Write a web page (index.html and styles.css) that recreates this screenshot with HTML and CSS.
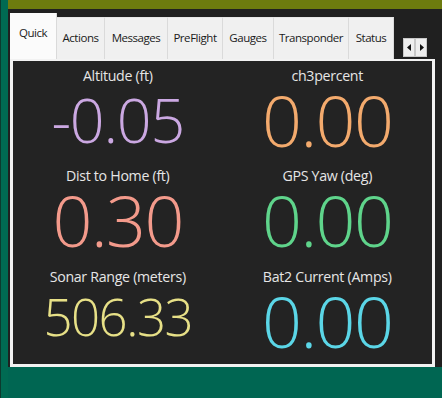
FILE: index.html
```html
<!DOCTYPE html>
<html>
<head>
<meta charset="utf-8">
<link rel="stylesheet" href="styles.css">
</head>
<body>
<div class="strip"></div>
<div class="main">
  <div class="topbar"></div>
  <div class="frame">
    <div class="tabbar">
      <div class="tab sel w1">Quick</div>
      <div class="tab w2">Actions</div>
      <div class="tab w3">Messages</div>
      <div class="tab w4">PreFlight</div>
      <div class="tab w5">Gauges</div>
      <div class="tab w6">Transponder</div>
      <div class="tab w7">Status</div>
      <div class="scroll">
        <div class="sbtn"><svg width="5" height="7" viewBox="0 0 5 7"><path d="M4 0L0 3.5L4 7Z" fill="#111"/></svg></div>
        <div class="sbtn"><svg width="5" height="7" viewBox="0 0 5 7"><path d="M1 0L5 3.5L1 7Z" fill="#111"/></svg></div>
      </div>
    </div>
    <div class="panel">
      <div class="grid">
        <div class="cell"><div class="lbl">Altitude (ft)</div><div class="val mid lilac">-0.05</div></div>
        <div class="cell"><div class="lbl">ch3percent</div><div class="val orange">0.00</div></div>
        <div class="cell"><div class="lbl">Dist to Home (ft)</div><div class="val salmon">0.30</div></div>
        <div class="cell"><div class="lbl">GPS Yaw (deg)</div><div class="val green">0.00</div></div>
        <div class="cell"><div class="lbl">Sonar Range (meters)</div><div class="val small yellow">506.33</div></div>
        <div class="cell"><div class="lbl">Bat2 Current (Amps)</div><div class="val cyan">0.00</div></div>
      </div>
    </div>
  </div>
</div>
</body>
</html>
```
FILE: styles.css
```css
html, body {
  margin: 0;
  padding: 0;
}
body {
  width: 442px;
  height: 398px;
  overflow: hidden;
  background: #006652;
  display: flex;
  font-family: "Open Sans", "Liberation Sans", sans-serif;
}
.strip {
  width: 8px;
  flex: none;
  background: #006a52;
  border-left: 1px solid #0c3a2e;
  box-sizing: border-box;
}
.main {
  flex: 1;
  display: flex;
  flex-direction: column;
}
.topbar {
  height: 9px;
  background: #6d7b0e;
}
.frame {
  background: #202020;
  padding: 5px 5px 0 2px;
  height: 358px;
  box-sizing: border-box;
  display: flex;
  flex-direction: column;
}
.tabbar {
  display: flex;
  align-items: flex-end;
  height: 45px;
  flex: none;
}
.tab {
  height: 42px;
  box-sizing: border-box;
  background: #f0f0f0;
  border-right: 1px solid #dadada;
  border-top: 1px solid #e6e6e6;
  color: #1a1a1a;
  font-size: 11.5px;
  letter-spacing: -0.45px;
  display: flex;
  align-items: center;
  justify-content: center;
  padding-bottom: 2px;
}
.tab.sel {
  height: 46px;
  background: #fbfbfb;
  padding-bottom: 8px;
  border-top: none;
}
.w1 { width: 47px; }
.w2 { width: 48px; }
.w3 { width: 63px; }
.w4 { width: 55px; }
.w5 { width: 51px; }
.w6 { width: 75px; }
.w7 { width: 45px; }
.scroll {
  display: flex;
  margin-left: 9px;
  margin-bottom: 2px;
}
.sbtn {
  width: 12px;
  height: 19px;
  box-sizing: border-box;
  background: #eeeeee;
  border: 1px solid #c8c8c8;
  display: flex;
  align-items: center;
  justify-content: center;
}
.panel {
  flex: 1;
  background: #f2f2f2;
  padding: 2px 3px 3px 3px;
  margin-right: 2px;
  display: flex;
  width: 425px;
  box-sizing: border-box;
}
.grid {
  flex: 1;
  background: #232323;
  display: grid;
  grid-template-columns: 1fr 1fr;
  grid-template-rows: 100px 101px 1fr;
  padding-top: 6px;
}
.cell {
  display: flex;
  flex-direction: column;
  align-items: center;
}
.lbl {
  color: #e6e6e6;
  font-size: 14.2px;
  line-height: 18px;
  letter-spacing: -0.3px;
}
.val {
  font-weight: 300;
  font-size: 70px;
  line-height: 70px;
  letter-spacing: -1.5px;
}
.val.mid {
  font-size: 61px;
  letter-spacing: -1.2px;
}
.val.small {
  font-size: 51px;
  line-height: 51px;
  margin-top: 5px;
}
.lilac { color: #cba8e2; }
.orange { color: #f3aa6d; }
.salmon { color: #f39a8b; }
.green { color: #5fd48b; }
.yellow { color: #e7e087; }
.cyan { color: #5bd6e7; }
```
